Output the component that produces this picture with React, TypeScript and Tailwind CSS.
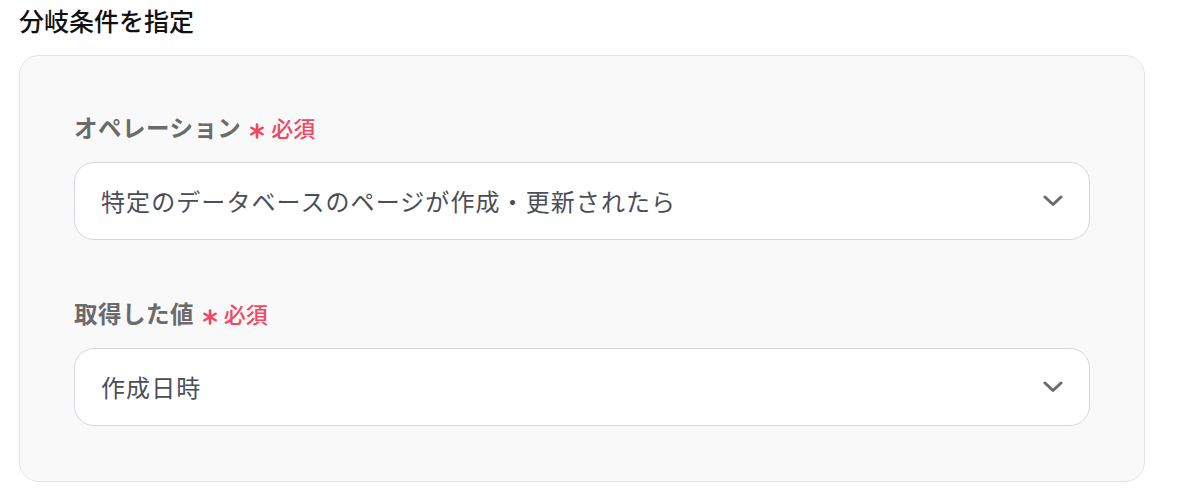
import type React from 'react'

const FONT = '"Noto Sans CJK JP", "Noto Sans", sans-serif'

const Chevron: React.FC = () => (
	<svg width="20" height="12" viewBox="0 0 20 12" fill="none" aria-hidden>
		<path
			d="M2 2l8 7.5L18 2"
			stroke="#6b6b6b"
			strokeWidth="3"
			strokeLinecap="round"
			strokeLinejoin="round"
		/>
	</svg>
)

// six-spoke required mark
const Asterisk: React.FC = () => (
	<svg width="16" height="16" viewBox="0 0 16 16" fill="none" aria-hidden className="mt-2">
		<g stroke="#f5455f" strokeWidth="2.6" strokeLinecap="round">
			<path d="M8 1.5v13" />
			<path d="M2.4 4.75l11.2 6.5" />
			<path d="M2.4 11.25l11.2-6.5" />
		</g>
	</svg>
)

interface FieldProps {
	label: string
	value: string
}

const SelectField: React.FC<FieldProps> = ({ label, value }) => (
	<div className="flex flex-col">
		<div className="mb-5 flex h-[30px] items-center">
			<span className="text-[23.5px] leading-[30px] font-bold tracking-[0.02em] text-[#6b6b6b]">
				{label}
			</span>
			<span className="ml-2 flex items-center">
				<Asterisk />
			</span>
			<span className="ml-1.5 text-[22px] leading-[30px] font-medium text-[#f5455f]">
				必須
			</span>
		</div>
		<button
			type="button"
			className="flex h-[78px] w-full items-center justify-between rounded-[20px] border border-[#d4d8e0] bg-white pr-[26px] pl-[26px] text-left"
		>
			<span className="text-[24px] tracking-[0.045em] text-[#4a4f57]">
				{value}
			</span>
			<Chevron />
		</button>
	</div>
)

export default function App() {
	return (
		<div className="min-h-screen bg-white px-[19px] pt-0.5" style={{ fontFamily: FONT }}>
			<h1 className="text-[25px] font-medium leading-[36px] text-[#111]">
				分岐条件を指定
			</h1>
			<div className="mt-[17px] w-[1126px] rounded-[20px] border border-[#e3e4e8] bg-[#f9f9fa] px-[54px] pt-[56px] pb-[55px]">
				<div className="flex flex-col gap-[58px]">
					<SelectField
						label="オペレーション"
						value="特定のデータベースのページが作成・更新されたら"
					/>
					<SelectField label="取得した値" value="作成日時" />
				</div>
			</div>
		</div>
	)
}
